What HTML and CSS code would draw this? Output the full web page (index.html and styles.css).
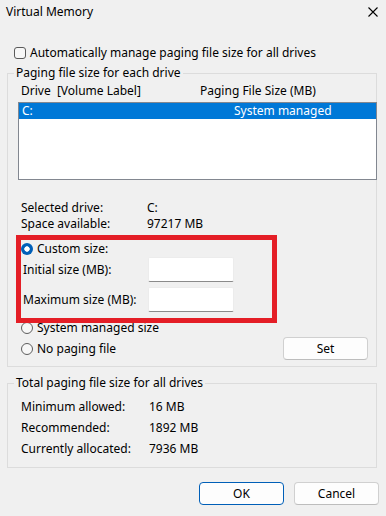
FILE: index.html
```html
<!DOCTYPE html>
<html lang="en">
<head>
<meta charset="utf-8">
<title>Virtual Memory</title>
<link rel="stylesheet" href="styles.css">
</head>
<body>
<div class="window">
  <div class="titlebar">
    <span class="title">Virtual Memory</span>
    <svg class="close" width="10" height="10" viewBox="0 0 10 10" aria-label="Close"><path d="M0.5 0.5 L9.5 9.5 M9.5 0.5 L0.5 9.5" stroke="#000" stroke-width="1.1" fill="none"/></svg>
  </div>
  <div class="content">
    <div class="check-row"><span class="checkbox"></span><span>Automatically manage paging file size for all drives</span></div>

    <fieldset class="group group-drives">
      <legend>Paging file size for each drive</legend>
      <div class="list-header"><span class="col-drive">Drive&nbsp; [Volume Label]</span><span class="col-size">Paging File Size (MB)</span></div>
      <div class="listbox">
        <div class="list-row selected"><span class="col-drive">C:</span><span class="col-size">System managed</span></div>
      </div>
      <div class="info">
        <div class="info-row"><span class="info-label">Selected drive:</span><span>C:</span></div>
        <div class="info-row"><span class="info-label">Space available:</span><span>97217 MB</span></div>
      </div>
      <div class="custom-block">
        <div class="radio-row"><span class="radio checked"></span><span>Custom size:</span></div>
        <div class="field-row"><span class="field-label">Initial size (MB):</span><span class="input"></span></div>
        <div class="field-row"><span class="field-label">Maximum size (MB):</span><span class="input"></span></div>
        <div class="highlight"></div>
      </div>
      <div class="radio-row system-row"><span class="radio"></span><span>System managed size</span></div>
      <div class="set-row">
        <div class="radio-row"><span class="radio"></span><span>No paging file</span></div>
        <button class="btn set-btn">Set</button>
      </div>
    </fieldset>

    <fieldset class="group group-total">
      <legend>Total paging file size for all drives</legend>
      <div class="total-row"><span class="total-label">Minimum allowed:</span><span>16 MB</span></div>
      <div class="total-row"><span class="total-label">Recommended:</span><span>1892 MB</span></div>
      <div class="total-row"><span class="total-label">Currently allocated:</span><span>7936 MB</span></div>
    </fieldset>

    <div class="buttons">
      <button class="btn primary">OK</button>
      <button class="btn">Cancel</button>
    </div>
  </div>
</div>
</body>
</html>
```
FILE: styles.css
```css
* { box-sizing: border-box; }
html, body { margin: 0; padding: 0; }
body {
  background: #f0f0f0;
  font-family: "Noto Sans", "Open Sans", sans-serif;
  font-size: 12px;
  line-height: 16px;
  color: #000;
}
.window { width: 386px; height: 516px; overflow: hidden; }

.titlebar {
  height: 24px;
  display: flex;
  align-items: center;
  justify-content: space-between;
  padding: 0 8px 0 6px;
}
.title { font-size: 12px; }
.close { display: block; margin-top: -1px; }

.content { padding: 0 9px 0 7px; }

.check-row {
  margin-top: 21px;
  display: flex;
  align-items: center;
  gap: 4px;
  padding-left: 7px;
  height: 16px;
}
.checkbox {
  width: 12px; height: 12px;
  border: 1px solid #5a5a5a;
  border-radius: 3px;
  background: #f7f7f7;
  flex: none;
}

.group {
  margin: 0;
  padding: 0;
  border: 1px solid #dcdcdc;
  min-inline-size: 0;
}
.group legend {
  margin-left: 6px;
  padding: 0 2px;
  line-height: 16px;
}
.group-drives { margin-top: 4px; padding-bottom: 6px; }

.list-header {
  display: flex;
  margin-top: 2px;
  padding-left: 13px;
  height: 16px;
}
.list-header .col-drive { width: 179px; }

.listbox {
  margin: 3px -1px 0 10px;
  height: 78px;
  border: 1px solid #828790;
  background: #fff;
}
.list-row {
  display: flex;
  height: 16px;
  align-items: center;
  padding-left: 3px;
}
.list-row.selected { background: #0078d7; color: #fff; }
.list-row .col-drive { width: 212px; }

.info { margin-top: 20px; padding-left: 13px; }
.info-row { display: flex; height: 16px; }
.info-label { width: 126px; }

.custom-block { position: relative; margin-top: 9px; }
.radio-row {
  display: flex;
  align-items: center;
  gap: 4px;
  height: 16px;
  padding-left: 13px;
}
.radio {
  width: 12px; height: 12px;
  border-radius: 50%;
  border: 1px solid #5d5d5d;
  background: #f7f7f7;
  flex: none;
}
.radio.checked {
  border: none;
  background: radial-gradient(circle at center, #fff 0 2.4px, #005fb8 3px);
}
.field-row {
  display: flex;
  align-items: center;
  height: 25px;
  padding-left: 15px;
}
.field-row + .field-row { margin-top: 5px; }
.field-label { width: 125px; }
.input {
  width: 86px; height: 25px;
  background: #fff;
  border: 1px solid #ececec;
  border-bottom: 1px solid #8a8a8a;
  border-radius: 2px;
}
.highlight {
  position: absolute;
  left: 8px;
  top: -6px;
  width: 261px;
  height: 88px;
  border: 5px solid #e41e26;
  pointer-events: none;
}
.system-row { margin-top: 8px; }
.set-row {
  display: flex;
  align-items: center;
  justify-content: space-between;
  margin-top: 1px;
  padding-right: 8px;
  height: 23px;
}
.set-row .radio-row { padding-left: 13px; }

.btn {
  font-family: inherit;
  font-size: 12px;
  line-height: 16px;
  color: #000;
  width: 85px;
  height: 23px;
  padding: 0;
  background: #fdfdfd;
  border: 1px solid #d0d0d0;
  border-bottom-color: #bdbdbd;
  border-radius: 4px;
}
.btn.primary { border-color: #005fb8; }

.group-total { margin-top: 8px; padding-bottom: 8px; }
.group-total legend + .total-row { margin-top: 5px; }
.total-row { display: flex; align-items: center; height: 21px; padding-left: 13px; }
.total-label { width: 128px; }

.buttons {
  display: flex;
  justify-content: flex-end;
  gap: 10px;
  margin: 14px -2px 0 0;
}
```
